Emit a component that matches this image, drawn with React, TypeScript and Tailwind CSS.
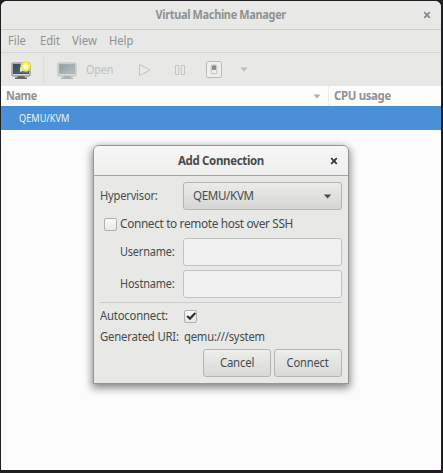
import type { ReactNode } from "react";

function CloseIcon({ className }: { className: string }) {
  return (
    <svg viewBox="0 0 8 8" className={`h-2 w-2 ${className}`}>
      <path d="M1.2 1.2 6.8 6.8M6.8 1.2 1.2 6.8" stroke="currentColor" strokeWidth="1.7" fill="none" />
    </svg>
  );
}

function Arrow({ className }: { className: string }) {
  return (
    <svg viewBox="0 0 10 6" className={className}>
      <path d="M0.5 0.5h9L5 5.5z" fill="currentColor" />
    </svg>
  );
}

function Monitor({ isNew = false }: { isNew?: boolean }) {
  const edge = isNew ? "#74776f" : "#b3b6b4";
  return (
    <svg viewBox="0 0 22 20" className="h-5 w-[22px] shrink-0">
      <defs>
        <linearGradient id={isNew ? "scrNew" : "scr"} x1="0" y1="0" x2="1" y2="1">
          <stop offset="0" stopColor={isNew ? "#33475b" : "#929ba5"} />
          <stop offset="0.5" stopColor={isNew ? "#465a6d" : "#a4adb6"} />
          <stop offset="1" stopColor={isNew ? "#75818c" : "#bac0c5"} />
        </linearGradient>
        <radialGradient id="glow">
          <stop offset="0" stopColor="#fffff0" />
          <stop offset="0.4" stopColor="#fbf66a" />
          <stop offset="0.75" stopColor="#ece630" />
          <stop offset="1" stopColor="#ece630" stopOpacity="0" />
        </radialGradient>
      </defs>
      <path d="M8 15.5h6l1 2h2v1.4H5v-1.4h2z" fill={isNew ? "#63665f" : "#b0b2ae"} />
      <rect x="2" y="3" width="18" height="13" rx="1" fill={isNew ? "#d8dad5" : "#dcdedc"} stroke={edge} strokeWidth="0.9" />
      <rect x="3.4" y="4.3" width="15.2" height="9.4" fill={isNew ? "url(#scrNew)" : "url(#scr)"} stroke={isNew ? "#26333f" : "#9ea5ab"} strokeWidth="0.6" />
      {isNew && (
        <>
          <path d="M10 7v5l5-2z" fill="#e8ecec" />
          <circle cx="15.8" cy="6.4" r="6" fill="url(#glow)" />
          <path d="m15.7 2.8 1.1 2.4 2.6.3-2 1.8.6 2.5-2.3-1.3-2.3 1.3.6-2.5-2-1.8 2.6-.3z" fill="#fffef0" />
        </>
      )}
    </svg>
  );
}

function Label({ children, className = "" }: { children: ReactNode; className?: string }) {
  return <span className={`block shrink-0 whitespace-nowrap ${className}`}>{children}</span>;
}

function Toolbar() {
  return (
    <div className="flex h-[33px] shrink-0 items-center bg-[#e8e8e7] pl-[9px] text-[#c0c2c1]">
      <Monitor isNew />
      <div className="ml-[11px] h-[26px] w-px bg-[#dcdcdb]" />
      <div className="ml-3 flex"><Monitor /></div>
      <Label className="ml-2 w-[29px] origin-left scale-x-[0.9] tracking-[-0.2px]">Open</Label>
      <svg viewBox="0 0 14 14" className="ml-[23px] h-3.5 w-3.5">
        <path d="M1.5 1.5 12.2 7 1.5 12.5z" fill="#e9eae8" stroke="#c3c6bf" />
      </svg>
      <svg viewBox="0 0 12 12" className="ml-[22px] h-3 w-3">
        <path d="M1.5 1.5h3.2v9H1.5zM7.3 1.5h3.2v9H7.3z" fill="#e9eae8" stroke="#c3c6bf" />
      </svg>
      <svg viewBox="0 0 16 17" className="ml-5 h-[17px] w-4">
        <rect x="0.5" y="0.5" width="15" height="16" rx="1.3" fill="#eeeeed" stroke="#bbbcba" />
        <rect x="5.2" y="4.2" width="5.6" height="8.6" rx="1" fill="#ededec" stroke="#b1b2b0" strokeWidth="0.8" />
        <rect x="6" y="4.5" width="4" height="4.4" fill="#878986" />
      </svg>
      <Arrow className="ml-[18px] h-[5px] w-2 text-[#babcbb]" />
    </div>
  );
}

function Check({ checked = false }: { checked?: boolean }) {
  return (
    <span className="relative block h-[13px] w-[13px] shrink-0 rounded-[2px] border border-[#adb0ad] bg-linear-to-b from-[#fafafa] to-[#e8e8e7]">
      {checked && (
        <svg viewBox="0 0 12 12" className="absolute -top-px left-0 h-3 w-3">
          <path d="M2.2 6 5 8.6 10.3 3" fill="none" stroke="#2e3436" strokeWidth="2.2" />
        </svg>
      )}
    </span>
  );
}

function Entry() {
  return <div className="h-7 flex-1 rounded-[3px] border border-[#c1c3c0] bg-[#f1f1f1]" />;
}

function Button({ children }: { children: ReactNode }) {
  return (
    <button className="flex h-7 w-[68px] items-center justify-center rounded-[3px] border border-[#b3b5b2] bg-linear-to-b from-[#ededec] to-[#d9dad8]">
      {children}
    </button>
  );
}

function Dialog() {
  return (
    <div className="absolute left-[93px] top-[145px] flex h-[239px] w-[256px] flex-col overflow-hidden rounded-t-[6px] border border-[#959795] bg-[#e8e8e7] text-[12px] text-[#464c4e] shadow-[0_3px_9px_1px_rgba(0,0,0,0.48)]">
      <header className="flex h-[30px] shrink-0 items-center border-b border-[#a4a6a4] bg-linear-to-b from-[#f7f7f7] to-[#efefee]">
        <div className="w-[17px]" />
        <div className="flex flex-1 justify-center">
          <Label className="scale-x-[0.955] font-bold tracking-[-0.35px]">Add Connection</Label>
        </div>
        <CloseIcon className="mr-[10px] text-[#2e3436]" />
      </header>
      <div className="flex flex-1 flex-col px-1.5 pt-1.5">
        <div className="flex h-7 items-center">
          <Label className="w-[83px] origin-left scale-x-[0.925] tracking-[-0.2px]">Hypervisor:</Label>
          <button className="flex h-7 flex-1 items-center justify-between rounded-[3px] border border-[#b3b5b2] bg-linear-to-b from-[#ebebea] to-[#d6d7d5] pl-[8.5px] pr-[9px]">
            <Label className="origin-left scale-x-[0.965] tracking-[-0.35px]">QEMU/KVM</Label>
            <Arrow className="h-[5px] w-[9px]" />
          </button>
        </div>
        <div className="flex h-[28px] items-center pl-1">
          <Check />
          <Label className="ml-[3px] origin-left scale-x-[0.985] tracking-[-0.35px]">Connect to remote host over SSH</Label>
        </div>
        <div className="flex h-7 items-center">
          <Label className="ml-5 w-[63px] origin-left scale-x-[0.91] tracking-[-0.2px]">Username:</Label>
          <Entry />
        </div>
        <div className="mt-1 flex h-7 items-center">
          <Label className="ml-5 w-[63px] origin-left scale-x-[0.91] tracking-[-0.2px]">Hostname:</Label>
          <Entry />
        </div>
        <div className="mt-1 h-px shrink-0 bg-[#cbcccb]" />
        <div className="mt-1 flex h-[18px] items-center">
          <Label className="w-[84px] origin-left scale-x-[0.94] tracking-[-0.2px]">Autoconnect:</Label>
          <Check checked />
        </div>
        <div className="mt-[2px] flex h-[19px] items-center">
          <Label className="w-[83px] origin-left scale-x-[0.945] tracking-[-0.2px]">Generated URI:</Label>
          <Label className="ml-[0.5px] origin-left scale-x-[0.935] tracking-[-0.2px]">qemu:///system</Label>
        </div>
        <div className="mt-[3px] flex justify-end gap-[3px]">
          <Button><Label className="scale-x-[0.95] tracking-[-0.2px]">Cancel</Label></Button>
          <Button><Label className="scale-x-[0.93] tracking-[-0.2px]">Connect</Label></Button>
        </div>
      </div>
    </div>
  );
}

export default function App() {
  return (
    <div className="relative h-[473px] w-[443px] overflow-hidden bg-[#201e21] pl-px pt-px font-['Noto_Sans',sans-serif] leading-none">
      <main className="flex h-[469px] w-[440px] flex-col overflow-hidden rounded-t-[6px] bg-[#fcfcfc] text-[12px] text-[#8f9291]">
        <header className="flex h-[29px] shrink-0 items-center border-b border-[#cececd] bg-[#e8e8e7]">
          <div className="w-[18px]" />
          <div className="flex flex-1 justify-center">
            <Label className="scale-x-[0.91] font-bold tracking-[-0.35px]">Virtual Machine Manager</Label>
          </div>
          <CloseIcon className="mr-[10px] text-[#868988]" />
        </header>
        <nav className="flex h-[23px] shrink-0 items-center border-b border-[#d5d5d4] bg-[#e8e8e7] pl-[6.5px]">
          <Label className="w-8 origin-left scale-x-[0.93]">File</Label>
          <Label className="w-8 origin-left scale-x-[0.93]">Edit</Label>
          <Label className="w-[37px] origin-left scale-x-[0.95]">View</Label>
          <Label className="origin-left scale-x-[0.93]">Help</Label>
        </nav>
        <Toolbar />
        <div className="flex h-5 shrink-0 items-center bg-[#fdfdfd] font-bold">
          <div className="flex h-full w-[328px] items-center justify-between border-r border-[#ededed] pl-[5px] pr-[7px]">
            <Label className="origin-left scale-x-[0.9] tracking-[-0.35px]">Name</Label>
            <Arrow className="h-[5px] w-2 text-[#b0b2b1]" />
          </div>
          <Label className="ml-[5px] origin-left scale-x-[0.95] tracking-[-0.35px]">CPU usage</Label>
        </div>
        <div className="flex h-6 shrink-0 items-center bg-[#4a90d9] pl-[18px] text-[10px] text-[#e9f2fb]">
          <Label className="origin-left scale-x-[0.92]">QEMU/KVM</Label>
        </div>
      </main>
      <Dialog />
    </div>
  );
}
